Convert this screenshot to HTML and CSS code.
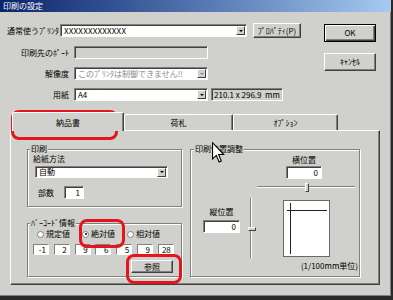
FILE: index.html
```html
<!DOCTYPE html>
<html lang="ja">
<head>
<meta charset="utf-8">
<title>印刷の設定</title>
<link rel="stylesheet" href="styles.css">
</head>
<body>
<div class="win">
  <div class="titlebar"><span>印刷の設定</span></div>
  <div class="top">
    <div class="form">
      <div class="row row1">
        <span class="lbl lbl1">通常使うﾌﾟﾘﾝﾀ</span>
        <div class="combo c1"><span class="val strong">XXXXXXXXXXXXX</span><span class="ddb"><i class="tri"></i></span></div>
        <div class="btn props">ﾌﾟﾛﾊﾟﾃｨ(P)</div>
      </div>
      <div class="row">
        <span class="lbl">印刷先のﾎﾟｰﾄ</span>
        <div class="field off w134"></div>
      </div>
      <div class="row">
        <span class="lbl">解像度</span>
        <div class="combo w134"><span class="val dim">このﾌﾟﾘﾝﾀは制御できません!!</span><span class="ddb"><i class="tri gray"></i></span></div>
      </div>
      <div class="row">
        <span class="lbl">用紙</span>
        <div class="combo w134"><span class="val">A4</span><span class="ddb"><i class="tri"></i></span></div>
        <div class="field off size">210.1 x 296.9&nbsp;&nbsp;mm</div>
      </div>
    </div>
    <div class="actions">
      <div class="btn ok">OK</div>
      <div class="btn cancel">ｷｬﾝｾﾙ</div>
    </div>
  </div>

  <div class="tabs">
    <div class="tab sel">納品書</div>
    <div class="tab t2">荷札</div>
    <div class="tab t3">ｵﾌﾟｼｮﾝ</div>
  </div>

  <div class="panel">
    <div class="leftcol">
      <div class="grp g-print">
        <span class="cap">印刷</span>
        <div class="lbl-s">給紙方法</div>
        <div class="combo feed"><span class="val">自動</span><span class="ddb"><i class="tri"></i></span></div>
        <div class="copies"><span class="clbl">部数</span><div class="field num">1</div></div>
      </div>
      <div class="grp g-bar">
        <span class="cap">ﾊﾞｰｺｰﾄﾞ情報</span>
        <div class="radios">
          <div class="radio"><span class="rc"></span><span>規定値</span></div>
          <div class="radio"><span class="rc on"></span><span>絶対値</span></div>
          <div class="radio"><span class="rc"></span><span>相対値</span></div>
        </div>
        <div class="boxes">
          <div class="box">-1</div>
          <div class="box">2</div>
          <div class="box">9</div>
          <div class="box">6</div>
          <div class="box">5</div>
          <div class="box">9</div>
          <div class="box">28</div>
        </div>
        <div class="btn ref">参照</div>
      </div>
    </div>
    <div class="grp g-pos">
      <span class="cap">印刷位置調整</span>
      <div class="hlabel">横位置</div>
      <div class="field hfield">0</div>
      <div class="hslider"><span class="track"></span><span class="thumb"></span></div>
      <div class="lower">
        <div class="vcol">
          <div class="vlabel">縦位置</div>
          <div class="field vfield">0</div>
        </div>
        <div class="vslider"><span class="track"></span><span class="thumb"></span></div>
        <div class="preview"><span class="ph"></span><span class="pv"></span></div>
      </div>
      <div class="unit">(1/100mm単位)</div>
    </div>
  </div>

  <div class="hl hl1"></div>
  <div class="hl hl2"></div>
  <div class="hl hl3"></div>
  <svg class="cursor" viewBox="0 0 12 19" width="13" height="21" aria-hidden="true">
    <path d="M0.5 0.5 L0.5 15.5 L4 12.2 L6.6 18.2 L8.6 17.3 L6.1 11.4 L10.8 11.4 Z" fill="#fff" stroke="#000" stroke-width="1" stroke-linejoin="miter"/>
  </svg>
</div>
</body>
</html>
```

FILE: styles.css
```css
* { box-sizing: border-box; margin: 0; padding: 0; }
html, body { width: 393px; height: 300px; overflow: hidden; }
body {
  background: #d0d0cc;
  font-family: "Noto Sans CJK JP", "Noto Sans", sans-serif;
  font-size: 8px;
  line-height: 10px;
  color: #000;
}
.win {
  position: relative;
  width: 393px;
  height: 300px;
  background: #d0d0cc;
  border-right: 2px solid #2a2a2a;
  border-bottom: 4px solid #2a2a2a;
  box-shadow: inset -1px -1px 0 #808080;
}
.titlebar {
  height: 12px;
  background: linear-gradient(90deg, #0a246a 0%, #5a7cb6 55%, #a6caf0 100%);
  color: #fff;
  padding-left: 3px;
  display: flex;
  align-items: center;
  font-size: 8px;
}

/* top form */
.top { display: flex; padding-top: 11px; }
.form { width: 324px; flex: none; }
.row { display: flex; align-items: center; height: 13px; margin-top: 8px; }
.row1 { height: 15px; margin-top: 0; padding-left: 7px; }
.lbl { width: 69px; margin-right: 5px; text-align: right; white-space: nowrap; }
.lbl1 { width: 53px; margin-right: 0; text-align: left; }

.combo {
  display: flex;
  align-items: center;
  height: 13px;
  background: #fff;
  border: 1px solid;
  border-color: #808080 #fff #fff #808080;
  box-shadow: inset 1px 1px 0 #404040;
  padding-left: 3px;
}
.combo .val { flex: 1; white-space: nowrap; overflow: hidden; line-height: 10px; }
.strong { letter-spacing: 0.2px; }
.dim { color: #8a8a8a; }
.ddb {
  flex: none;
  width: 9px;
  height: 9px;
  margin-right: 1px;
  background: #d0d0cc;
  border: 1px solid;
  border-color: #fff #404040 #404040 #fff;
  display: flex;
  align-items: center;
  justify-content: center;
}
.tri {
  width: 0;
  height: 0;
  border-left: 2px solid transparent;
  border-right: 2px solid transparent;
  border-top: 2px solid #000;
}
.tri.gray { border-top-color: #8a8a8a; }
.c1 { width: 187px; }
.w134 { width: 134px; }

.field {
  height: 13px;
  background: #fff;
  border: 1px solid;
  border-color: #808080 #fff #fff #808080;
  box-shadow: inset 1px 1px 0 #404040;
}
.field.off { background: #d0d0cc; }
.size {
  margin-left: 3px;
  width: 72px;
  padding-left: 2px;
  display: flex;
  align-items: center;
  white-space: nowrap;
}

.btn {
  background: #d0d0cc;
  border: 1px solid;
  border-color: #fff #404040 #404040 #fff;
  box-shadow: inset -1px -1px 0 #808080;
  display: flex;
  align-items: center;
  justify-content: center;
  white-space: nowrap;
}
.props { margin-left: 6px; width: 48px; height: 15px; }
.actions { display: flex; flex-direction: column; width: 52px; }
.ok {
  margin-top: 1px;
  height: 18px;
  border-color: #000;
  box-shadow: inset 1px 1px 0 #fff, inset -1px -1px 0 #404040, inset -2px -2px 0 #808080;
}
.cancel { margin-top: 11px; height: 18px; }

/* tabs */
.tabs {
  display: flex;
  align-items: flex-end;
  height: 18px;
  margin-top: 11px;
  padding-left: 12px;
  position: relative;
  z-index: 1;
}
.tab {
  height: 16px;
  background: #d0d0cc;
  border: 1px solid;
  border-bottom: none;
  border-color: #fff #404040 transparent #fff;
  box-shadow: inset -1px 0 0 #808080;
  border-radius: 2px 2px 0 0;
  text-align: center;
  padding-top: 3px;
}
.tab.sel { width: 112px; height: 19px; margin-bottom: -1px; padding-top: 5px; }
.t2 { width: 109px; }
.t3 { width: 105px; }

.panel {
  margin-left: 10px;
  width: 370px;
  height: 155px;
  border: 1px solid;
  border-color: #fff #404040 #404040 #fff;
  box-shadow: inset -1px -1px 0 #808080;
  display: flex;
  gap: 8px;
  padding: 18px 0 0 16px;
}

/* group boxes */
.grp {
  position: relative;
  border: 1px solid #808080;
  box-shadow: 1px 1px 0 #fff, inset 1px 1px 0 #fff;
}
.cap {
  position: absolute;
  top: -6px;
  left: 2px;
  padding: 0 1px;
  background: #d0d0cc;
  line-height: 10px;
  white-space: nowrap;
}
.leftcol { width: 155px; display: flex; flex-direction: column; }
.g-print { height: 58px; }
.lbl-s { margin: 4px 0 0 5px; }
.feed { margin: 2px 0 0 7px; width: 133px; height: 12px; }
.copies { display: flex; align-items: center; height: 13px; margin: 8px 0 0 10px; }
.clbl { width: 26px; }
.num { width: 20px; text-align: right; padding-right: 3px; line-height: 11px; }

.g-bar { margin-top: 16px; height: 54px; }
.radios {
  display: grid;
  grid-template-columns: 45px 45px 45px;
  height: 10px;
  margin: 5px 0 0 9px;
}
.radio { display: flex; align-items: center; gap: 2px; white-space: nowrap; }
.rc {
  position: relative;
  width: 7px;
  height: 7px;
  border-radius: 50%;
  background: #fff;
  border: 1px solid #808080;
  flex: none;
}
.rc.on::after {
  content: "";
  position: absolute;
  left: 1.5px;
  top: 1.5px;
  width: 2px;
  height: 2px;
  border-radius: 50%;
  background: #000;
}
.boxes {
  display: grid;
  grid-template-columns: repeat(7, 16px);
  column-gap: 4.8px;
  margin: 5px 0 0 5px;
}
.box {
  height: 11px;
  background: #fff;
  border: 1px solid;
  border-color: #808080 #fff #fff #808080;
  text-align: right;
  padding-right: 2px;
  line-height: 9px;
}
.ref { margin: 5px 0 0 103px; width: 42px; height: 13px; }

.g-pos { width: 170px; height: 128px; }
.g-pos .cap { left: 3px; }
.hlabel { margin: 5px 0 0 95px; width: 36px; text-align: center; }
.hfield { margin: 1px 0 0 95px; width: 36px; text-align: right; padding-right: 3px; line-height: 11px; }
.hslider { position: relative; margin: 3px 0 0 66px; width: 98px; height: 10px; }
.hslider .track {
  position: absolute;
  left: 0; right: 0; top: 4px;
  height: 2px;
  border-top: 1px solid #808080;
  border-bottom: 1px solid #fff;
}
.hslider .thumb {
  position: absolute;
  left: 48px; top: 1px;
  width: 4px; height: 9px;
  background: #d0d0cc;
  border: 1px solid;
  border-color: #fff #404040 #404040 #fff;
}
.lower { display: flex; margin-top: 4px; }
.vcol { margin-left: 12px; width: 37px; }
.vlabel { margin-top: 11px; text-align: center; }
.vfield { margin-top: 3px; text-align: right; padding-right: 3px; line-height: 11px; }
.vslider { position: relative; margin: 2px 0 0 6px; width: 10px; height: 60px; }
.vslider .track {
  position: absolute;
  top: 0; bottom: 0; left: 4px;
  width: 2px;
  border-left: 1px solid #808080;
  border-right: 1px solid #fff;
}
.vslider .thumb {
  position: absolute;
  left: 2px; top: 29px;
  width: 8px; height: 4px;
  background: #d0d0cc;
  border: 1px solid;
  border-color: #fff #404040 #404040 #fff;
}
.preview {
  position: relative;
  margin: 4px 0 0 27px;
  width: 47px;
  height: 57px;
  background: #fff;
  border: 1px solid #6a6a6a;
}
.ph { position: absolute; left: 3px; top: 9px; width: 40px; height: 1px; background: #222; }
.pv { position: absolute; left: 6px; top: 2px; width: 1px; height: 51px; background: #222; }
.unit { margin-top: 3px; text-align: right; padding-right: 1px; }

/* annotation overlays */
.hl { position: absolute; border: 3px solid #e6141c; border-radius: 8px; }
.hl1 { left: 11px; top: 110px; width: 107px; height: 30px; }
.hl2 { left: 79px; top: 219px; width: 46px; height: 29px; }
.hl3 { left: 126px; top: 254px; width: 56px; height: 30px; }
.cursor { position: absolute; left: 212px; top: 142px; }
```
